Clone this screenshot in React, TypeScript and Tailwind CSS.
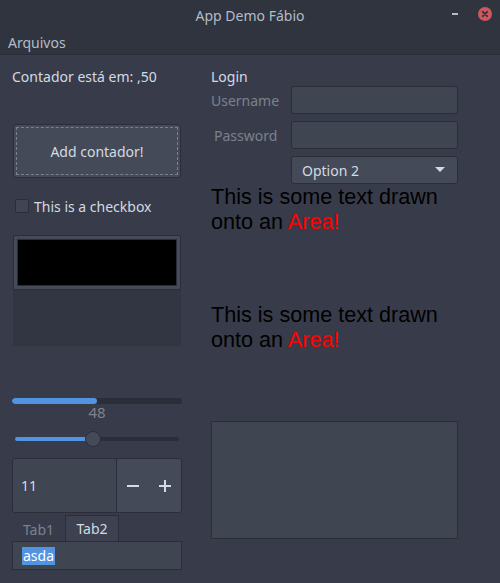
import React from 'react';

const font = { fontFamily: '"Noto Sans", "DejaVu Sans", sans-serif' };
const areaFont = { fontFamily: '"Liberation Sans", Arial, sans-serif' };

const Entry: React.FC<{ children?: React.ReactNode; className?: string }> = ({ children, className = '' }) => (
    <div className={`h-[28px] rounded-[3px] border border-[#2b2e39] bg-[#404552] ${className}`}>{children}</div>
);

const AreaText: React.FC<{ h: string }> = ({ h }) => (
    <div className={`${h} text-[21.6px] leading-[25px] text-black`} style={areaFont}>
        This is some text drawn<br />onto an <span className="text-[#ff0000]">Area!</span>
    </div>
);

const App: React.FC = () => {
    return (
        <div className="w-[500px] h-[583px] flex flex-col bg-[#383c4a] text-[14px] text-[#d3dae3] overflow-hidden" style={font}>
            {/* Title bar */}
            <div className="h-[30px] bg-[#2f343f] flex items-center relative">
                <span className="flex-1 text-center text-[14px] text-[#b4bcc8] pt-[1px]">App Demo Fábio</span>
                <div className="absolute right-[8px] top-[7px] flex items-center gap-[20px]">
                    <div className="w-[6px] h-[2px] bg-[#b4bcc8]" />
                    <div className="w-[14px] h-[14px] rounded-full bg-[#cc575d] flex items-center justify-center">
                        <svg width="8" height="8" viewBox="0 0 8 8">
                            <path d="M1.8 1.8 L6.2 6.2 M6.2 1.8 L1.8 6.2" stroke="#2f343f" strokeWidth="1.8" strokeLinecap="round" />
                        </svg>
                    </div>
                </div>
            </div>
            {/* Menu bar */}
            <div className="h-[25px] bg-[#2f343f] border-b border-[#2b2e39] flex items-center px-[8px] text-[#b4bcc8]">
                Arquivos
            </div>

            <div className="flex pl-[12px]">
                {/* Left column */}
                <div className="w-[170px] flex flex-col">
                    <div className="mt-[12px] h-[20px] leading-[20px]">Contador está em: ,50</div>
                    <div className="mt-[37px] mx-[1px] h-[54px] rounded-[3px] border border-[#2b2e39] bg-[#444a58] p-[2px]">
                        <div className="h-full border border-dashed border-[#7c818c] flex items-center justify-center text-[#d3dae3]">
                            Add contador!
                        </div>
                    </div>
                    <div className="mt-[18px] h-[20px] flex items-center gap-[5px] pl-[3px]">
                        <div className="w-[14px] h-[14px] rounded-[2px] border border-[#2b2e39] bg-[#404552]" />
                        <span>This is a checkbox</span>
                    </div>
                    <div className="mt-[18px] h-[113px] flex flex-col bg-[#323643] border border-[#383c4a]">
                        <div className="h-[55px] rounded-[2px] border border-[#2b2e39] bg-[#444a58] p-[3px]">
                            <div className="h-full bg-black border border-[#2b2e39]" />
                        </div>
                    </div>
                    {/* Progress */}
                    <div className="mt-[51px] h-[6px] rounded-full bg-[#2b2e39] overflow-hidden">
                        <div className="h-full bg-[#5294e2] rounded-full" style={{ width: '50%' }} />
                    </div>
                    <div className="h-[17px] leading-[17px] text-center text-[15px] text-[#7c818c]">48</div>
                    {/* Slider */}
                    <div className="mt-[10px] h-[16px] relative mx-[3px] flex items-center">
                        <div className="w-full h-[4px] rounded-full bg-[#2b2e39]">
                            <div className="h-full rounded-full bg-[#5294e2]" style={{ width: '48%' }} />
                        </div>
                        <div className="absolute left-[70px] top-0 w-[16px] h-[16px] rounded-full bg-[#444a58] border border-[#2b2e39]" />
                    </div>
                    {/* Spin button */}
                    <div className="mt-[11px] h-[55px] flex rounded-[3px] border border-[#2b2e39] overflow-hidden">
                        <div className="w-[104px] bg-[#404552] border-r border-[#2b2e39] flex items-center pl-[8px]">11</div>
                        <div className="flex-1 bg-[#444a58] flex items-center justify-around">
                            <svg width="12" height="12" viewBox="0 0 12 12">
                                <path d="M0 6 H12" stroke="#d3dae3" strokeWidth="2" />
                            </svg>
                            <svg width="12" height="12" viewBox="0 0 12 12">
                                <path d="M0 6 H12 M6 0 V12" stroke="#d3dae3" strokeWidth="2" />
                            </svg>
                        </div>
                    </div>
                    {/* Tabs */}
                    <div className="mt-[2px] h-[26px] flex items-end text-[14px]">
                        <div className="w-[53px] h-[24px] flex items-center justify-center text-[#7c818c]">Tab1</div>
                        <div className="w-[54px] h-[26px] flex items-center justify-center bg-[#3e4250] border border-b-0 border-[#2b2e39] text-[#d3dae3]">
                            Tab2
                        </div>
                    </div>
                    <div className="h-[29px] bg-[#404552] border border-[#2b2e39] flex items-center pl-[9px]">
                        <span className="bg-[#5294e2] text-white leading-[18px] px-[1px]">asda</span>
                    </div>
                </div>

                {/* Right column */}
                <div className="ml-[29px] w-[247px] flex flex-col">
                    <div className="mt-[12px] h-[19px] leading-[20px]">Login</div>
                    <div className="flex items-center">
                        <span className="w-[80px] text-[#7c818c]">Username</span>
                        <Entry className="flex-1" />
                    </div>
                    <div className="mt-[7px] flex items-center">
                        <span className="w-[80px] pl-[3px] text-[#7c818c]">Password</span>
                        <Entry className="flex-1" />
                    </div>
                    <div className="mt-[7px] flex">
                        <div className="w-[80px]" />
                        <div className="flex-1 h-[28px] rounded-[3px] border border-[#2b2e39] bg-[#444a58] flex items-center justify-between pl-[10px] pr-[12px]">
                            <span>Option 2</span>
                            <svg width="10" height="6" viewBox="0 0 10 6">
                                <path d="M0 0 H10 L5 5 Z" fill="#d3dae3" />
                            </svg>
                        </div>
                    </div>
                    <AreaText h="h-[118px]" />
                    <AreaText h="h-[119px]" />
                    <div className="h-[118px] bg-[#404552] border border-[#2b2e39]" />
                </div>
            </div>
        </div>
    );
};

export default App;
